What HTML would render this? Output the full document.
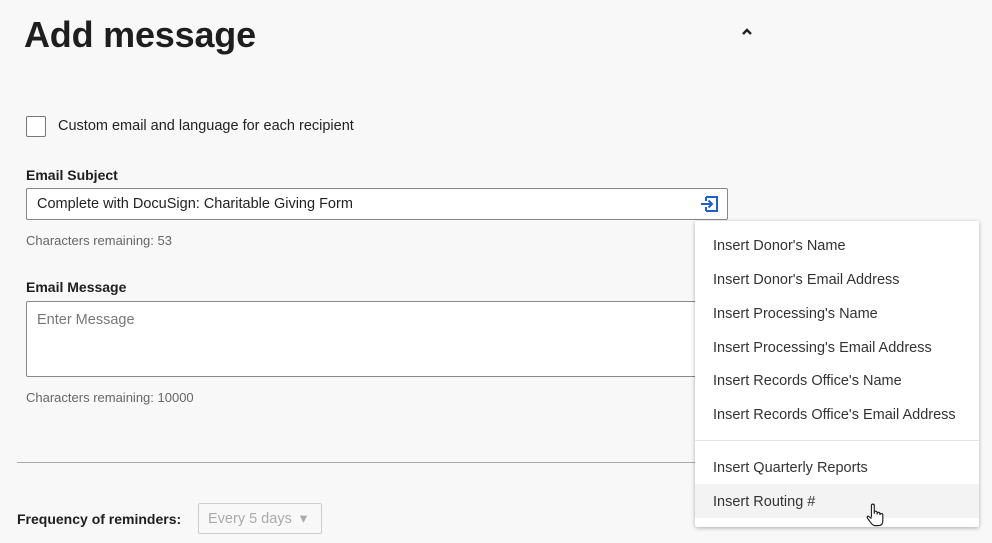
<!DOCTYPE html>
<html><head><style>
body{margin:0;width:992px;height:543px;background:#f8f8f8;font-family:"Liberation Sans",sans-serif;position:relative;overflow:hidden;color:#1e1e1e}
.a{position:absolute;white-space:nowrap}
h1{position:absolute;left:24px;top:14px;margin:0;font-size:36px;font-weight:bold;color:#1e1e1e;letter-spacing:-0.2px}
.lbl{font-size:14px;font-weight:bold;color:#1e1e1e}
.hint{font-size:13px;color:#666}
.box{position:absolute;background:#fff;border:1px solid #888;border-radius:2px;box-sizing:border-box}
.dd{position:absolute;left:695px;top:221px;width:284px;height:306px;background:#fff;border-radius:2px;box-shadow:0 1px 4px rgba(0,0,0,.3)}
.it{position:absolute;left:18px;font-size:14.5px;color:#333}
</style></head><body>
<h1>Add message</h1>
<svg class="a" style="left:741px;top:27px" width="12" height="9" viewBox="0 0 12 9"><path d="M2 7 L6 3 L10 7" fill="none" stroke="#222" stroke-width="2.4"/></svg>
<div class="a" style="left:26px;top:116px;width:18px;height:19px;border:1px solid #777;border-radius:2px;background:#fff"></div>
<div class="a" style="left:58px;top:118px;font-size:14.5px;color:#222">Custom email and language for each recipient</div>
<div class="a lbl" style="left:26px;top:167px">Email Subject</div>
<div class="box" style="left:26px;top:188px;width:702px;height:32px"></div>
<div class="a" style="left:37px;top:196px;font-size:14.5px;color:#222">Complete with DocuSign: Charitable Giving Form</div>
<svg class="a" style="left:699px;top:195px" width="21" height="18" viewBox="0 0 21 18"><path d="M7 2 H18 V16 H7 M7 6 V2 M7 12 V16" fill="none" stroke="#1f5fc9" stroke-width="2"/><path d="M2 9 H13 M9.5 5.5 L13 9 L9.5 12.5" fill="none" stroke="#1f5fc9" stroke-width="2"/></svg>
<div class="a hint" style="left:26px;top:233px">Characters remaining: 53</div>
<div class="a lbl" style="left:26px;top:279px">Email Message</div>
<div class="box" style="left:26px;top:301px;width:700px;height:76px"></div>
<div class="a" style="left:37px;top:312px;font-size:14.5px;color:#777">Enter Message</div>
<div class="a hint" style="left:26px;top:390px">Characters remaining: 10000</div>
<div class="a" style="left:17px;top:462px;width:700px;height:1px;background:#aaa"></div>
<div class="a lbl" style="left:17px;top:511px">Frequency of reminders:</div>
<div class="a" style="left:198px;top:503px;width:124px;height:31px;border:1px solid #ccc;border-radius:2px;box-sizing:border-box;background:#f8f8f8"></div>
<div class="a" style="left:208px;top:511px;font-size:14.5px;color:#aaa">Every 5 days &nbsp;▾</div>
<div class="dd">
<div class="it" style="top:17px">Insert Donor's Name</div>
<div class="it" style="top:51px">Insert Donor's Email Address</div>
<div class="it" style="top:85px">Insert Processing's Name</div>
<div class="it" style="top:119px">Insert Processing's Email Address</div>
<div class="it" style="top:152px">Insert Records Office's Name</div>
<div class="it" style="top:186px">Insert Records Office's Email Address</div>
<div class="a" style="left:0;top:219px;width:284px;height:1px;background:#e4e4e4"></div>
<div class="it" style="top:239px">Insert Quarterly Reports</div>
<div class="a" style="left:0;top:263px;width:284px;height:34px;background:#f3f3f3"></div>
<div class="it" style="top:273px">Insert Routing #</div>
<svg class="a" style="left:170px;top:281px" width="20" height="26" viewBox="0 0 16 22"><path d="M5 13 V3 a1.2 1.2 0 0 1 2.4 0 V10 M7.4 9 a1.2 1.2 0 0 1 2.4 0 V10.5 M9.8 10 a1.2 1.2 0 0 1 2.4 0 V11 M12.2 11 a1.2 1.2 0 0 1 2.4 0 V16 Q14.6 20 11 20 H8 Q6 20 4 17 L1.5 13.5 Q1 12 2.5 12 L5 14" fill="#fff" stroke="#222" stroke-width="1"/></svg>
</div>
</body></html>
